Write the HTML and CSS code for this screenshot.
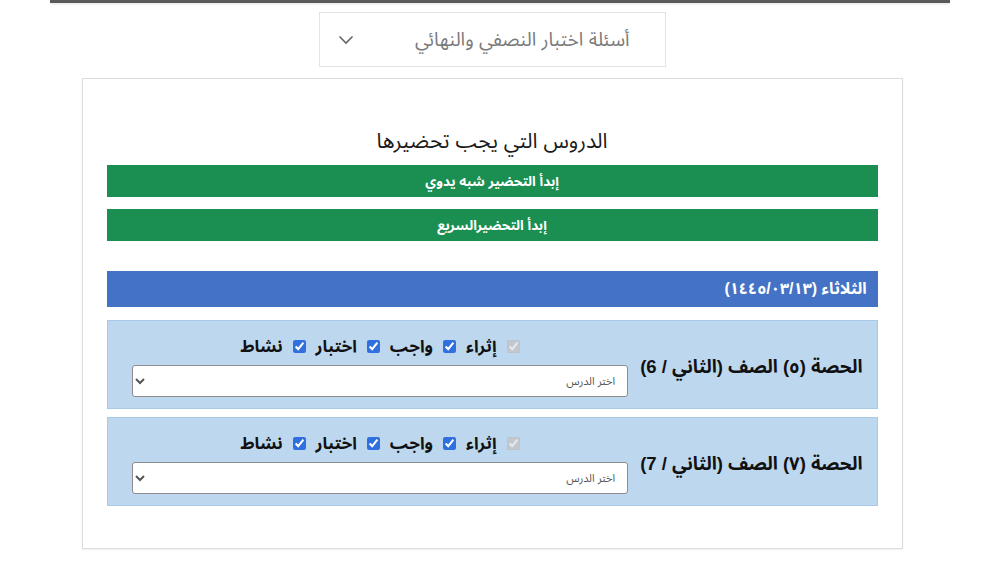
FILE: index.html
```html
<!DOCTYPE html>
<html lang="ar" dir="rtl">
<head>
<meta charset="utf-8">
<title>الدروس التي يجب تحضيرها</title>
<link rel="stylesheet" href="styles.css">
</head>
<body>
<div class="topline"></div>
<main class="page">
  <div class="picker">
    <span class="picker-text">أسئلة اختبار النصفي والنهائي</span>
    <svg class="chev" width="16" height="10" viewBox="0 0 16 10"><path d="M1.5 1.5 L8 8 L14.5 1.5" fill="none" stroke="#666" stroke-width="1.6"/></svg>
  </div>
  <section class="card">
    <h2 class="title">الدروس التي يجب تحضيرها</h2>
    <div class="btn-green">إبدأ التحضير شبه يدوي</div>
    <div class="btn-green">إبدأ التحضيرالسريع</div>
    <div class="day">الثلاثاء (١٤٤٥/٠٣/١٣)</div>
    <div class="period">
      <div class="period-label">الحصة (٥) الصف (الثاني / 6)</div>
      <div class="period-controls">
        <div class="checks">
          <label><input type="checkbox" checked disabled></label>
          <label>إثراء <input type="checkbox" checked></label>
          <label>واجب <input type="checkbox" checked></label>
          <label>اختبار <input type="checkbox" checked></label>
          <label>نشاط</label>
        </div>
        <select class="lesson"><option>اختر الدرس</option></select>
      </div>
    </div>
    <div class="period">
      <div class="period-label">الحصة (٧) الصف (الثاني / 7)</div>
      <div class="period-controls">
        <div class="checks">
          <label><input type="checkbox" checked disabled></label>
          <label>إثراء <input type="checkbox" checked></label>
          <label>واجب <input type="checkbox" checked></label>
          <label>اختبار <input type="checkbox" checked></label>
          <label>نشاط</label>
        </div>
        <select class="lesson"><option>اختر الدرس</option></select>
      </div>
    </div>
  </section>
</main>
</body>
</html>
```

FILE: styles.css
```css
* { box-sizing: border-box; }
html, body { margin: 0; padding: 0; background: #fff; }
body {
  font-family: "Liberation Sans", "Noto Sans Arabic", "DejaVu Sans", sans-serif;
  color: #222;
  width: 1000px;
  height: 563px;
  overflow: hidden;
}
.topline {
  width: 900px;
  height: 3px;
  margin: 0 auto;
  background: #5a5a5a;
  box-shadow: 0 1px 3px rgba(0,0,0,0.12);
}
.page {
  width: 984px;
  margin: 0 16px 0 0;
  display: flex;
  flex-direction: column;
  align-items: center;
  padding-top: 9px;
}
.picker {
  width: 347px;
  height: 55px;
  border: 1px solid #e3e3e3;
  display: flex;
  align-items: center;
  justify-content: space-between;
  padding: 0 35px 0 18px;
  color: #7a7a7a;
  font-size: 19px;
}
.chev { display: block; }
.card {
  margin-top: 11px;
  width: 821px;
  height: 471px;
  border: 1px solid #dcdcdc;
  box-shadow: 0 1px 2px rgba(0,0,0,0.06);
  padding: 0 24px;
}
.title {
  margin: 40px 0 0;
  height: 46px;
  text-align: center;
  font-size: 21px;
  font-weight: normal;
  color: #1a1a1a;
}
.btn-green {
  height: 32px;
  background: #1a8f51;
  color: #fff;
  font-size: 13.5px;
  font-weight: bold;
  display: flex;
  align-items: center;
  justify-content: center;
  margin-bottom: 12px;
}
.day {
  margin-top: 30px;
  height: 36px;
  background: #4472c4;
  color: #fff;
  font-size: 16px;
  font-weight: bold;
  display: flex;
  align-items: center;
  padding-right: 11px;
  margin-bottom: 13px;
}
.period {
  height: 89px;
  background: #bdd7ee;
  border: 1px solid #a9c9e8;
  display: flex;
  align-items: center;
  padding: 0 14px 0 24px;
  margin-bottom: 8px;
}
.period-label {
  font-size: 18.5px;
  font-weight: bold;
  color: #111;
  padding-top: 6px;
}
.period-controls {
  flex: 1;
  margin-right: 12px;
  display: flex;
  flex-direction: column;
  align-items: stretch;
}
.checks {
  display: flex;
  justify-content: center;
  align-items: center;
  gap: 10px;
  height: 20px;
  margin-bottom: 8px;
  margin-top: 4px;
  font-size: 17px;
  font-weight: bold;
  color: #111;
}
.checks label {
  display: flex;
  align-items: center;
  gap: 10px;
}
.checks input {
  margin: 0;
  width: 13px;
  height: 13px;
  accent-color: #2f6fe0;
}
.lesson {
  height: 32px;
  width: 100%;
  font-family: "Liberation Sans", "Noto Sans Arabic", "DejaVu Sans", sans-serif;
  font-size: 11px;
  color: #555;
  background: #fff;
  border: 1px solid #8d8d8d;
  border-radius: 3px;
  padding: 0 8px;
}
```
